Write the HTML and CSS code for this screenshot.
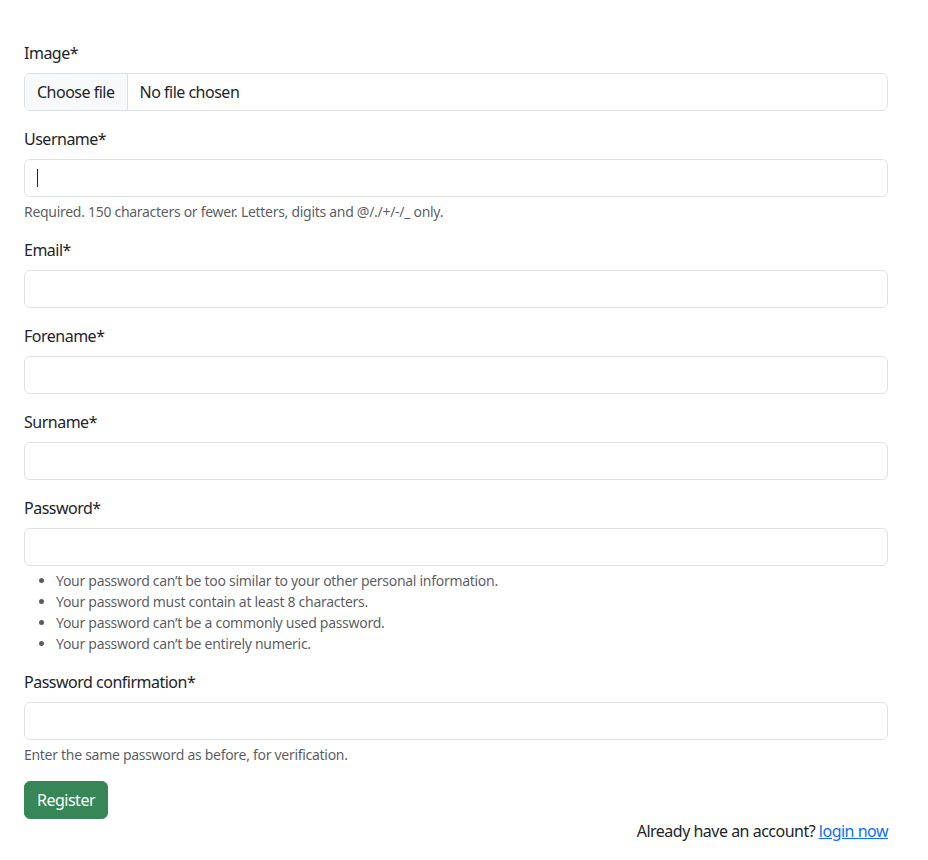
FILE: index.html
```html
<!DOCTYPE html>
<html lang="en">
<head>
<meta charset="utf-8">
<title>Register</title>
<link rel="stylesheet" href="styles.css">
</head>
<body>
<main class="container">
  <form class="form">
    <div class="field">
      <label class="label">Image*</label>
      <div class="file-input">
        <span class="file-btn">Choose file</span>
        <span class="file-name">No file chosen</span>
      </div>
    </div>
    <div class="field">
      <label class="label">Username*</label>
      <div class="input-wrap">
        <input class="control" type="text">
        <span class="caret"></span>
      </div>
      <div class="help">Required. 150 characters or fewer. Letters, digits and @/./+/-/_ only.</div>
    </div>
    <div class="field">
      <label class="label">Email*</label>
      <input class="control" type="email">
    </div>
    <div class="field">
      <label class="label">Forename*</label>
      <input class="control" type="text">
    </div>
    <div class="field">
      <label class="label">Surname*</label>
      <input class="control" type="text">
    </div>
    <div class="field">
      <label class="label">Password*</label>
      <input class="control" type="password">
      <div class="help">
        <ul class="help-list">
          <li>Your password can’t be too similar to your other personal information.</li>
          <li>Your password must contain at least 8 characters.</li>
          <li>Your password can’t be a commonly used password.</li>
          <li>Your password can’t be entirely numeric.</li>
        </ul>
      </div>
    </div>
    <div class="field">
      <label class="label">Password confirmation*</label>
      <input class="control" type="password">
      <div class="help">Enter the same password as before, for verification.</div>
    </div>
    <button class="btn" type="button">Register</button>
    <p class="login-line">Already have an account? <a href="#" class="link">login now</a></p>
  </form>
</main>
</body>
</html>
```
FILE: styles.css
```css
* { box-sizing: border-box; }
html, body { margin: 0; padding: 0; background: #fff; }
body {
  font-family: "Noto Sans", "Open Sans", sans-serif;
  font-size: 16px;
  line-height: 1.5;
  color: #212529;
  letter-spacing: -0.5px;
}
.container {
  width: 864px;
  margin: 41px 24px 0;
}
.form { display: flex; flex-direction: column; }
.field { margin-bottom: 16px; display: flex; flex-direction: column; }
.label { display: block; margin-bottom: 8px; height: 24px; }
.control {
  display: block;
  width: 100%;
  height: 38px;
  padding: 6px 12px;
  font: inherit;
  color: #212529;
  background: #fff;
  border: 1px solid #dee2e6;
  border-radius: 6px;
  outline: none;
}
.input-wrap { position: relative; }
.caret {
  position: absolute;
  left: 13px;
  top: 10px;
  width: 1px;
  height: 18px;
  background: #212529;
}
.file-input {
  display: flex;
  height: 38px;
  border: 1px solid #dee2e6;
  border-radius: 6px;
  overflow: hidden;
}
.file-btn {
  padding: 6px 12px;
  background: #f8f9fa;
  border-right: 1px solid #dee2e6;
  white-space: nowrap;
}
.file-name { padding: 6px 12px; white-space: nowrap; }
.help {
  margin-top: 4px;
  font-size: 14px;
  line-height: 21px;
  letter-spacing: -0.29px;
  color: rgba(33, 37, 41, 0.75);
}
.help-list { margin: 0; padding-left: 32px; }
.btn {
  align-self: flex-start;
  height: 38px;
  padding: 6px 12px;
  font: inherit;
  letter-spacing: -0.5px;
  color: #fff;
  background: #378658;
  border: 1px solid #378658;
  border-radius: 6px;
}
.login-line { margin: 0; text-align: right; }
.link { color: #0d6efd; text-decoration: underline; }
```
